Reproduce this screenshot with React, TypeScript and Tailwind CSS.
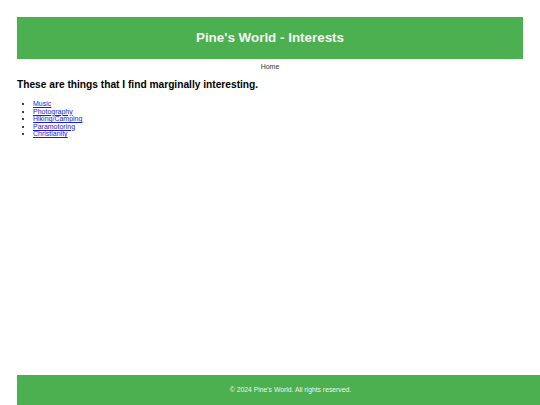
const interests = ["Music", "Photography", "Hiking/Camping", "Paramotoring", "Christianity"];

export default function App() {
  return (
    <div className="min-h-[405px] flex flex-col overflow-hidden bg-white font-['Liberation_Sans',Arial,sans-serif]">
      <header className="mx-[17px] mt-[17px] h-[42px] bg-[#4caf50] flex items-center justify-center">
        <h1 className="text-[13.4px] font-bold text-[#f4f4f4]">Pine's World - Interests</h1>
      </header>
      <nav className="mt-[3px] text-center text-[7px] leading-[10px] text-[#333]">
        <a href="#">Home</a>
      </nav>
      <main className="mx-[17px] mt-[6px] flex-1">
        <h2 className="text-[10.2px] font-bold text-black leading-[14px]">
          These are things that I find marginally interesting.
        </h2>
        <ul className="mt-[8px] pl-[16px] list-disc text-[7px] leading-[7.6px]">
          {interests.map((item) => (
            <li key={item}>
              <a href="#" className="text-[#1a1add] underline">
                {item}
              </a>
            </li>
          ))}
        </ul>
      </main>
      <footer className="ml-[17px] w-[547px] shrink-0 h-[30px] bg-[#4caf50] flex items-center justify-center">
        <p className="text-[6.8px] text-[#eef5ee]">© 2024 Pine's World. All rights reserved.</p>
      </footer>
    </div>
  );
}
